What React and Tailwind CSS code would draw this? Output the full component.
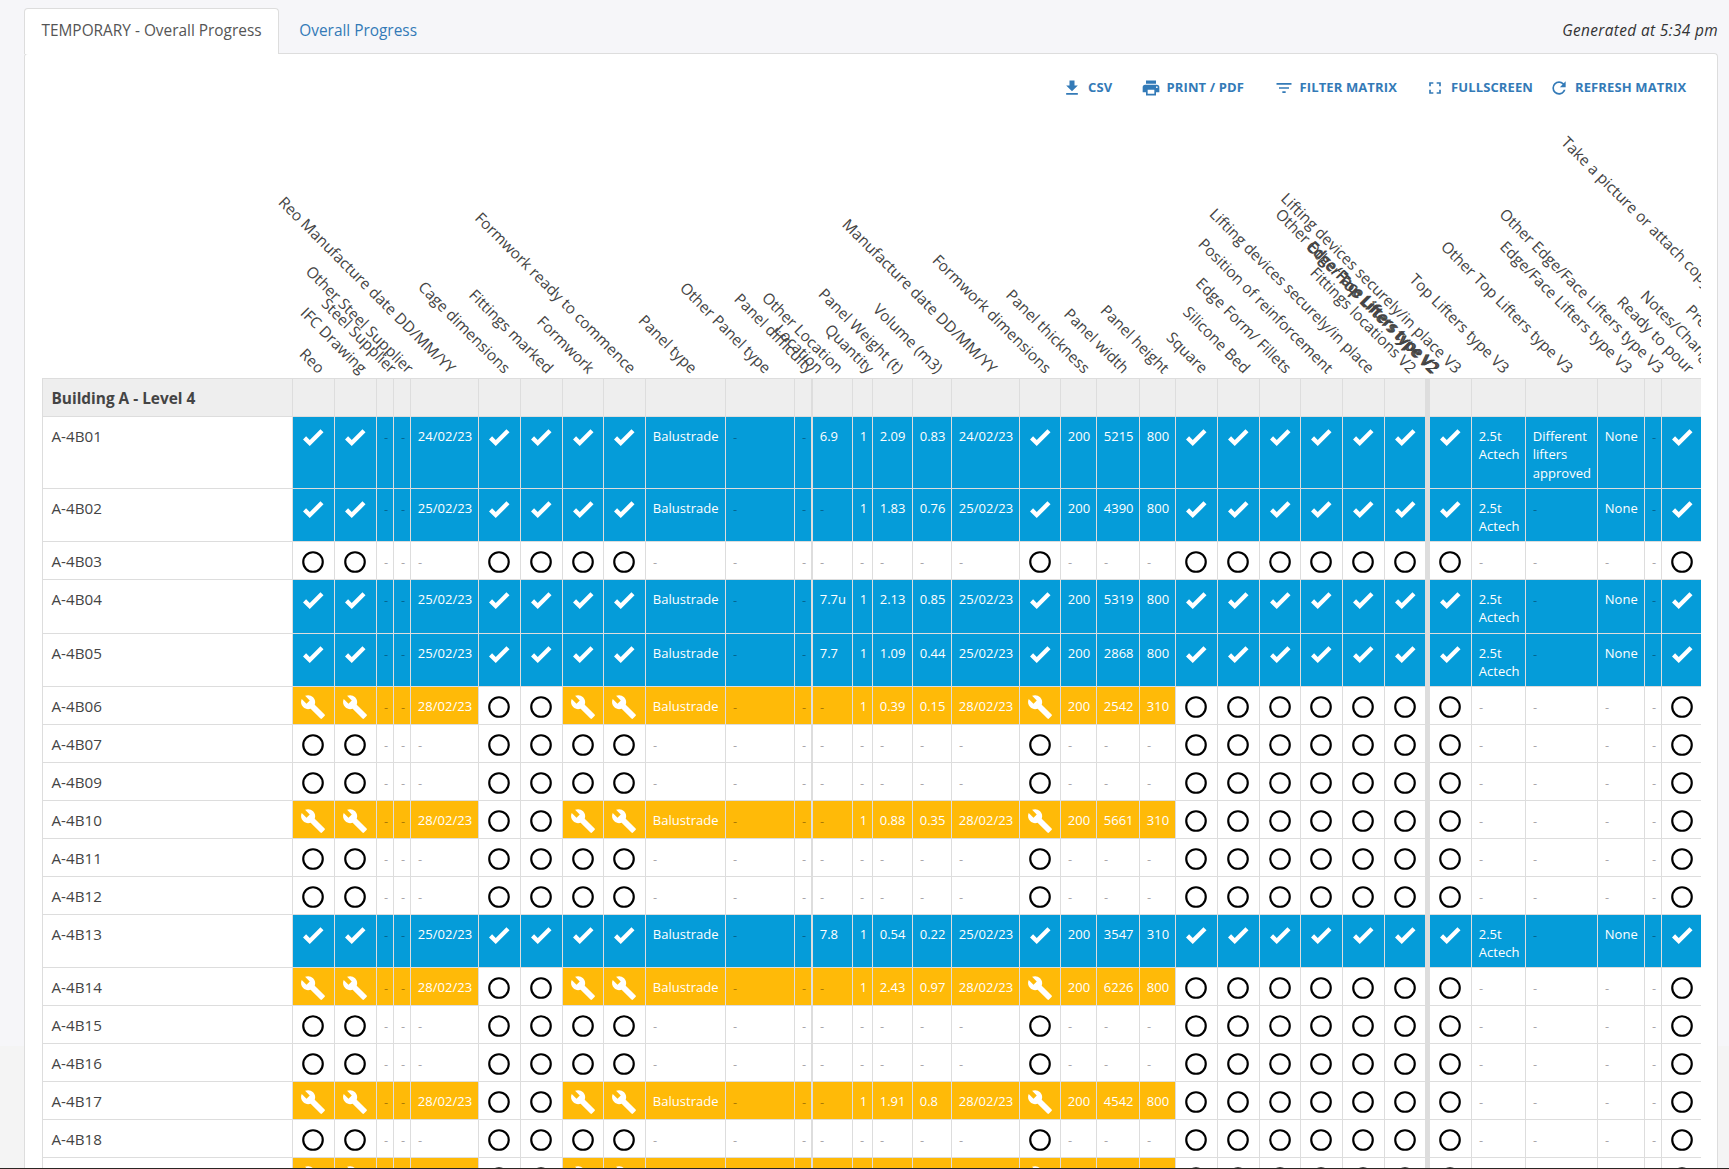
import React from "react";

const ICONS = {
  check: "M9,20.42L2.79,14.21L5.62,11.38L9,14.77L18.88,4.88L21.71,7.71L9,20.42Z",
  wrench:
    "M22.7,19L13.6,9.9C14.5,7.6 14,4.9 12.1,3C10.1,1 7.1,0.6 4.7,1.7L9,6L6,9L1.6,4.7C0.4,7.1 0.9,10.1 2.9,12.1C4.8,14 7.5,14.5 9.8,13.6L18.9,22.7C19.3,23.1 19.9,23.1 20.3,22.7L22.6,20.4C23.1,20 23.1,19.3 22.7,19Z",
  circle:
    "M12,20A8,8 0 0,1 4,12A8,8 0 0,1 12,4A8,8 0 0,1 20,12A8,8 0 0,1 12,20M12,2A10,10 0 0,0 2,12A10,10 0 0,0 12,22A10,10 0 0,0 22,12A10,10 0 0,0 12,2Z",
  download: "M5,20H19V18H5M19,9H15V3H9V9H5L12,16L19,9Z",
  printer:
    "M18,3H6V7H18M19,12A1,1 0 0,1 18,11A1,1 0 0,1 19,10A1,1 0 0,1 20,11A1,1 0 0,1 19,12M16,19H8V14H16M19,8H5A3,3 0 0,0 2,11V17H6V21H18V17H22V11A3,3 0 0,0 19,8Z",
  filter: "M6,13H18V11H6M3,6V8H21V6M10,18H14V16H10V18Z",
  fullscreen:
    "M5,5H10V7H7V10H5V5M14,5H19V10H17V7H14V5M17,14H19V19H14V17H17V14M10,17V19H5V14H7V17H10Z",
  refresh:
    "M17.65,6.35C16.2,4.9 14.21,4 12,4A8,8 0 0,0 4,12A8,8 0 0,0 12,20C15.73,20 18.84,17.45 19.73,14H17.65C16.83,16.33 14.61,18 12,18A6,6 0 0,1 6,12A6,6 0 0,1 12,6C13.66,6 15.14,6.69 16.22,7.78L13,11H20V4L17.65,6.35Z",
};

function Icon({ name, className }) {
  return (
    <svg viewBox="0 0 24 24" fill="currentColor" className={className}>
      <path d={ICONS[name]} />
    </svg>
  );
}

// [header, column width including its right border, kind]
const COLUMNS = [
  ["Reo", 42, "icon"],
  ["IFC Drawing", 42, "icon"],
  ["Steel Supplier", 17],
  ["Other Steel Supplier", 17],
  ["Reo Manufacture date DD/MM/YY", 68],
  ["Cage dimensions", 42, "icon"],
  ["Fittings marked", 42, "icon"],
  ["Formwork", 41, "icon"],
  ["Formwork ready to commence", 42, "icon"],
  ["Panel type", 80],
  ["Other Panel type", 69],
  ["Panel difficulty", 17],
  ["Location", 1, "hidden"],
  ["Other Location", 40],
  ["Quantity", 20],
  ["Panel Weight (t)", 40],
  ["Volume (m3)", 39],
  ["Manufacture date DD/MM/YY", 68],
  ["Formwork dimensions", 41, "icon"],
  ["Panel thickness", 36],
  ["Panel width", 43],
  ["Panel height", 36],
  ["Square", 42, "icon"],
  ["Silicone Bed", 42, "icon"],
  ["Edge Form/ Fillets", 41, "icon"],
  ["Position of reinforcement", 42, "icon"],
  ["Lifting devices securely/in place", 42, "icon"],
  ["Fittings locations V2", 41, "icon"],
  ["Top Lifters type V2", 1, "hidden"],
  ["Other Top Lifters type V2", 1, "hidden"],
  ["Edge/Face Lifters type V2", 1, "hidden"],
  ["Other Edge/Face Lifters type V2", 1, "hidden"],
  ["Lifting devices securely/in place V3", 42, "icon"],
  ["Top Lifters type V3", 54],
  ["Other Top Lifters type V3", 72],
  ["Edge/Face Lifters type V3", 47],
  ["Other Edge/Face Lifters type V3", 17],
  ["Ready to pour", 42, "icon"],
  ["Notes/Changes", 17],
  ["Pre-pour QA", 46],
  ["Take a picture or attach copy of the pour card", 40],
];

const done = (name, height, date, loc, weight, volume, width, h, other = "-") => ({
  name,
  height,
  state: "done",
  text: {
    4: date, 9: "Balustrade", 13: loc, 14: "1", 15: weight, 16: volume, 17: date,
    19: "200", 20: width, 21: h, 33: "2.5t Actech", 34: other, 35: "None",
  },
});

const work = (name, weight, volume, width, h) => ({
  name,
  height: 38,
  state: "work",
  text: {
    4: "28/02/23", 9: "Balustrade", 14: "1", 15: weight, 16: volume, 17: "28/02/23",
    19: "200", 20: width, 21: h,
  },
});

const open = (name) => ({ name, height: 38, state: "open", text: {} });

const ROWS = [
  done("A-4B01", 72, "24/02/23", "6.9", "2.09", "0.83", "5215", "800", "Different lifters approved"),
  done("A-4B02", 53, "25/02/23", "-", "1.83", "0.76", "4390", "800"),
  open("A-4B03"),
  done("A-4B04", 54, "25/02/23", "7.7u", "2.13", "0.85", "5319", "800"),
  done("A-4B05", 53, "25/02/23", "7.7", "1.09", "0.44", "2868", "800"),
  work("A-4B06", "0.39", "0.15", "2542", "310"),
  open("A-4B07"),
  open("A-4B09"),
  work("A-4B10", "0.88", "0.35", "5661", "310"),
  open("A-4B11"),
  open("A-4B12"),
  done("A-4B13", 53, "25/02/23", "7.8", "0.54", "0.22", "3547", "310"),
  work("A-4B14", "2.43", "0.97", "6226", "800"),
  open("A-4B15"),
  open("A-4B16"),
  work("A-4B17", "1.91", "0.8", "4542", "800"),
  open("A-4B18"),
  work("A-4B19", "1.91", "0.8", "4542", "800"),
];

function cellState(row, i) {
  if (row.state !== "work") return row.state;
  return i === 5 || i === 6 || i > 21 ? "open" : "work";
}

const CELL_BG = {
  done: "bg-[#059cd9] text-white",
  work: "bg-[#ffba08] text-white",
  open: "bg-white text-black",
};
const STATE_ICON = { done: "check", work: "wrench", open: "circle" };

function Cell({ row, index }) {
  const [, width, kind] = COLUMNS[index];
  const state = cellState(row, index);
  const value = row.text[index] || "-";
  return (
    <div style={{ width }} className={`shrink-0 overflow-hidden border-r border-[#ddd] ${CELL_BG[state]}`}>
      {kind === "icon" && (
        <div className="flex pt-[6.6px] pl-[6.8px]">
          <Icon name={STATE_ICON[state]} className="size-[26px] shrink-0" />
        </div>
      )}
      {!kind &&
        (value === "-" ? (
          <div className="pt-[11px] pl-[7px] text-[13px] leading-[18.5px] text-black/35">-</div>
        ) : (
          <div className="pt-[10px] pl-[6.7px] text-[13px] leading-[18.3px] tracking-[0.04px]">{value}</div>
        ))}
    </div>
  );
}

function ToolButton({ icon, label, className }) {
  return (
    <a className={`flex shrink-0 items-center gap-[6px] whitespace-nowrap ${className}`}>
      <Icon name={icon} className="size-5 shrink-0" />
      <span>{label}</span>
    </a>
  );
}

export default function App() {
  return (
    <div className="flex h-[1169px] w-[1729px] flex-col overflow-hidden bg-[linear-gradient(#f6f6f9_1046px,#f4f4f4_1046px)] font-['Open_Sans',sans-serif] text-[15.4px] text-[#444]">
      <div className="flex h-[1168px] flex-col pt-2 pr-[11px] pl-6">
        <div className="flex h-[46px] shrink-0 items-start">
          <div className="z-10 flex h-[46px] w-[255px] items-center rounded-t-[4px] border border-b-0 border-[#ddd] bg-white pl-[16.5px] pb-[1px] whitespace-nowrap text-[#555]">
            TEMPORARY - Overall Progress
          </div>
          <div className="flex h-[45px] items-center pl-[20.3px] text-[#337ab7]">Overall Progress</div>
          <div className="ml-auto flex h-[45px] items-center tracking-[0.37px] italic text-[#333]">
            Generated at 5:34 pm
          </div>
        </div>
        <div className="-mt-px flex h-[1130px] shrink-0 flex-col rounded-t-[4px] border border-b-0 border-[#ddd] bg-white pl-[17px] pr-4">
          <div className="flex h-[68px] shrink-0 items-center justify-end pr-[14px] text-[13px] font-bold tracking-[0.12px] text-[#337ab7]">
            <ToolButton icon="download" label="CSV" className="w-[78.5px]" />
            <ToolButton icon="printer" label="PRINT / PDF" className="w-[133px]" />
            <ToolButton icon="filter" label="FILTER MATRIX" className="w-[151.5px]" />
            <ToolButton icon="fullscreen" label="FULLSCREEN" className="w-[124px]" />
            <ToolButton icon="refresh" label="REFRESH MATRIX" className="w-[138px]" />
          </div>
          <div className="h-[1060px] w-[1659px] overflow-hidden">
            <div className="flex h-[256px] w-[1800px] pl-[251.6px]">
              {COLUMNS.map(([label, width], i) => (
                <div key={i} style={{ width }} className="relative shrink-0">
                  <span className="absolute right-1/2 bottom-[0.4px] origin-bottom-right rotate-45 leading-[21px] whitespace-nowrap text-[#444]">
                    {label}
                  </span>
                </div>
              ))}
            </div>
            <div className="flex h-[39px] w-[1800px] border-y border-l border-[#ddd] bg-[#eee]">
              <div className="w-[250px] shrink-0 border-r border-[#ddd] pt-[9px] pl-[8.5px] leading-[21px] font-bold">
                Building A - Level 4
              </div>
              {COLUMNS.map(([, width], i) => (
                <div key={i} style={{ width }} className="shrink-0 border-r border-[#ddd]" />
              ))}
            </div>
            {ROWS.map((row) => (
              <div
                key={row.name}
                style={{ height: row.height }}
                className="flex w-[1800px] border-b border-l border-[#ddd]"
              >
                <div className="w-[250px] shrink-0 border-r border-[#ddd] bg-white pt-[8.5px] pl-[8.5px] text-[15.2px] leading-[21px]">
                  {row.name}
                </div>
                {COLUMNS.slice(0, 38).map((_, i) => (
                  <Cell key={i} row={row} index={i} />
                ))}
              </div>
            ))}
          </div>
        </div>
      </div>
      <div className="z-10 h-px shrink-0 bg-[#2b2623]" />
    </div>
  );
}
